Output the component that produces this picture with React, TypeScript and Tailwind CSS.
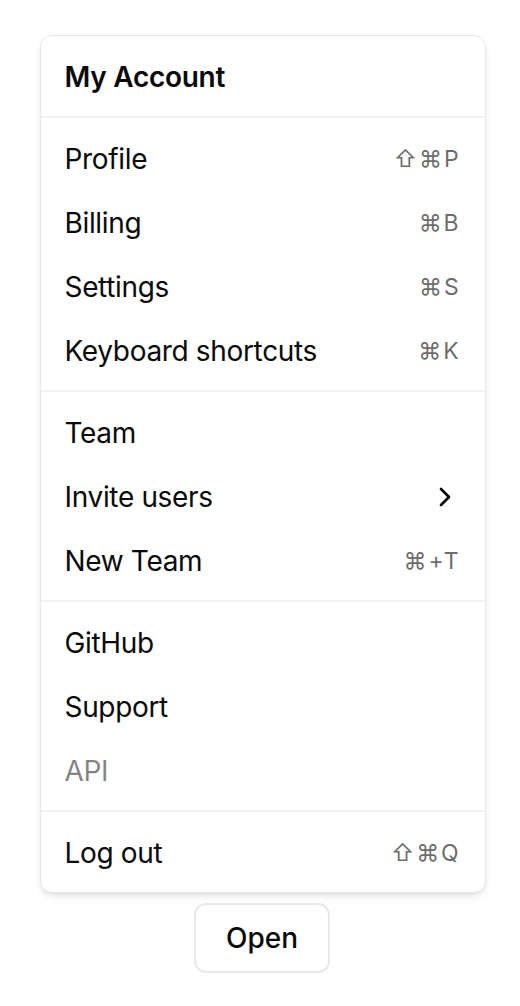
import React from 'react';
import { ChevronRight } from 'lucide-react';

type Item = { label: string; shortcut?: string; sub?: boolean; disabled?: boolean };

const groups: Item[][] = [
  [
    { label: 'Profile', shortcut: '⇧⌘P' },
    { label: 'Billing', shortcut: '⌘B' },
    { label: 'Settings', shortcut: '⌘S' },
    { label: 'Keyboard shortcuts', shortcut: '⌘K' },
  ],
  [
    { label: 'Team' },
    { label: 'Invite users', sub: true },
    { label: 'New Team', shortcut: '⌘+T' },
  ],
  [{ label: 'GitHub' }, { label: 'Support' }, { label: 'API', disabled: true }],
  [{ label: 'Log out', shortcut: '⇧⌘Q' }],
];

function Separator() {
  return <div className="-mx-2 my-2 h-[2px] bg-[#f2f2f2]" />;
}

function MenuItem({ item }: { item: Item }) {
  return (
    <div
      className={`flex h-16 items-center rounded-lg px-4 pt-[2px] text-[28px] leading-10 tracking-[-0.012em] text-[#0a0a0a] ${
        item.disabled ? 'opacity-50' : ''
      }`}
    >
      <span>{item.label}</span>
      {item.shortcut && (
        <span className="ml-auto text-[23px] tracking-[0.08em] text-[#0a0a0a] opacity-60">
          {item.shortcut}
        </span>
      )}
      {item.sub && <ChevronRight className="ml-auto h-8 w-8" strokeWidth={2} />}
    </div>
  );
}

export default function App() {
  return (
    <div
      className="flex min-h-screen flex-col items-center bg-white pt-[35px]"
      style={{ fontFamily: 'Inter, "Noto Sans", sans-serif' }}
    >
      <div className="ml-[5px] w-[446px] rounded-xl border border-[#e8e8e8] bg-white p-2 shadow-[0_4px_8px_-2px_rgba(0,0,0,0.12),0_2px_4px_-2px_rgba(0,0,0,0.08)]">
        <div className="flex h-16 items-center px-4 pt-[2px] text-[28px] font-semibold tracking-[-0.01em] text-[#0a0a0a]">
          My Account
        </div>
        {groups.map((g, gi) => (
          <div key={gi}>
            <Separator />
            {g.map((item) => (
              <MenuItem key={item.label} item={item} />
            ))}
          </div>
        ))}
      </div>
      <button className="ml-[4px] mt-[10px] h-[70px] w-[136px] rounded-xl border-2 border-[#e8e8e8] bg-white text-[28px] font-medium text-[#0a0a0a]">
        Open
      </button>
    </div>
  );
}
